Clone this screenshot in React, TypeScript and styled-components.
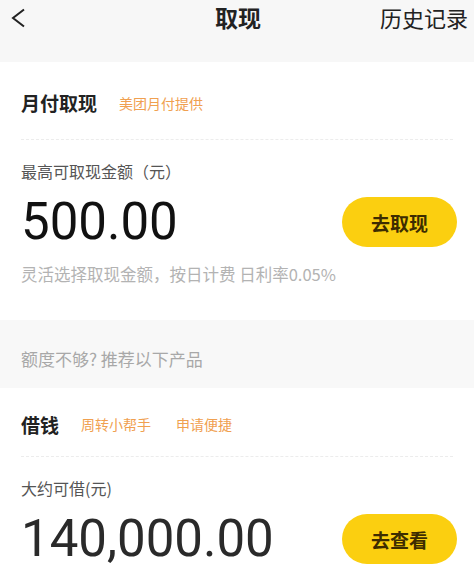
import styled, { createGlobalStyle } from "styled-components";

const GlobalStyle = createGlobalStyle`
  html, body {
    margin: 0;
    padding: 0;
    background: #ffffff;
    font-family: "Noto Sans CJK SC", "Noto Sans", sans-serif;
  }
`;

interface Product {
  title: string;
  tags: string[];
  label: string;
  amount: string;
  action: string;
  note: string;
  headHeight: number;
  dark?: boolean;
}

const cash: Product = {
  title: "月付取现",
  tags: ["美团月付提供"],
  label: "最高可取现金额（元）",
  amount: "500.00",
  action: "去取现",
  note: "灵活选择取现金额，按日计费 日利率0.05%",
  headHeight: 78,
  dark: true,
};

const loan: Product = {
  title: "借钱",
  tags: ["周转小帮手", "申请便捷"],
  label: "大约可借(元)",
  amount: "140,000.00",
  action: "去查看",
  note: "日利率0.03%起，年化利率10.8%起",
  headHeight: 69,
};

function ProductCard(props: { product: Product }) {
  const p = props.product;
  return (
    <Card>
      <CardHead $height={p.headHeight}>
        <CardTitle>{p.title}</CardTitle>
        {p.tags.map((t) => (
          <Tag key={t}>{t}</Tag>
        ))}
      </CardHead>
      <Body>
        <Label>{p.label}</Label>
        <AmountRow>
          <Amount $dark={p.dark}>{p.amount}</Amount>
          <ActionButton>{p.action}</ActionButton>
        </AmountRow>
        <Note>{p.note}</Note>
      </Body>
    </Card>
  );
}

export default function App() {
  return (
    <Page>
      <GlobalStyle />
      <Header>
        <BackButton>
          <svg width="16" height="20" viewBox="0 0 16 20" fill="none">
            <path
              d="M14 1.5 L3 10 L14 18.5"
              stroke="#222"
              strokeWidth="2"
              strokeLinejoin="miter"
            />
          </svg>
        </BackButton>
        <Title>取现</Title>
        <HistoryLink>历史记录</HistoryLink>
      </Header>
      <ProductCard product={cash} />
      <Recommend>额度不够? 推荐以下产品</Recommend>
      <ProductCard product={loan} />
    </Page>
  );
}

const Page = styled.div`
  width: 474px;
  height: 583px;
  overflow: hidden;
  background: #ffffff;
`;

const Header = styled.div`
  height: 62px;
  background: #f7f7f7;
  display: grid;
  grid-template-columns: 1fr auto 1fr;
  align-items: start;
  padding: 2px 6px 0 10px;
  box-sizing: border-box;
`;

const BackButton = styled.div`
  padding-top: 6px;
  display: flex;
`;

const Title = styled.div`
  font-size: 23px;
  font-weight: 700;
  color: #222;
  line-height: 30px;
  margin-left: -2px;
`;

const HistoryLink = styled.div`
  justify-self: end;
  font-size: 22px;
  color: #222;
  line-height: 30px;
`;

const Card = styled.div`
  background: #ffffff;
  padding: 0 21px;
`;

const CardHead = styled.div<{ $height: number }>`
  height: ${(p) => p.$height}px;
  display: flex;
  align-items: center;
  gap: 22px;
  border-bottom: 1.5px dashed #ececec;
  padding-top: 4px;
  box-sizing: border-box;
`;

const CardTitle = styled.div`
  font-size: 19px;
  font-weight: 700;
  color: #222;
`;

const Tag = styled.span`
  font-size: 14px;
  color: #f0a050;
  & + & {
    margin-left: 3px;
  }
`;

const Body = styled.div`
  padding-top: 20px;
  padding-bottom: 35px;
`;

const Label = styled.div`
  font-size: 16px;
  color: #555;
  line-height: 22px;
`;

const AmountRow = styled.div`
  display: flex;
  align-items: center;
  justify-content: space-between;
  margin-top: 12px;
`;

const Amount = styled.div<{ $dark?: boolean }>`
  font-family: Roboto, "Liberation Sans", sans-serif;
  font-size: 51px;
  line-height: 56px;
  color: ${(p) => (p.$dark ? "#111" : "#2a2a2a")};
`;

const ActionButton = styled.button`
  width: 115px;
  height: 50px;
  margin-right: -4px;
  border: none;
  border-radius: 25px;
  background: #fbcf10;
  color: #3d2c00;
  font-family: "Noto Sans CJK SC", sans-serif;
  font-size: 19px;
  font-weight: 700;
`;

const Note = styled.div`
  margin-top: 13px;
  font-size: 16.5px;
  color: #b3b3b3;
  line-height: 22px;
`;

const Recommend = styled.div`
  height: 68px;
  background: #f8f8f8;
  display: flex;
  align-items: center;
  padding: 8px 21px 0;
  box-sizing: border-box;
  font-size: 17px;
  color: #a8a8a8;
`;
